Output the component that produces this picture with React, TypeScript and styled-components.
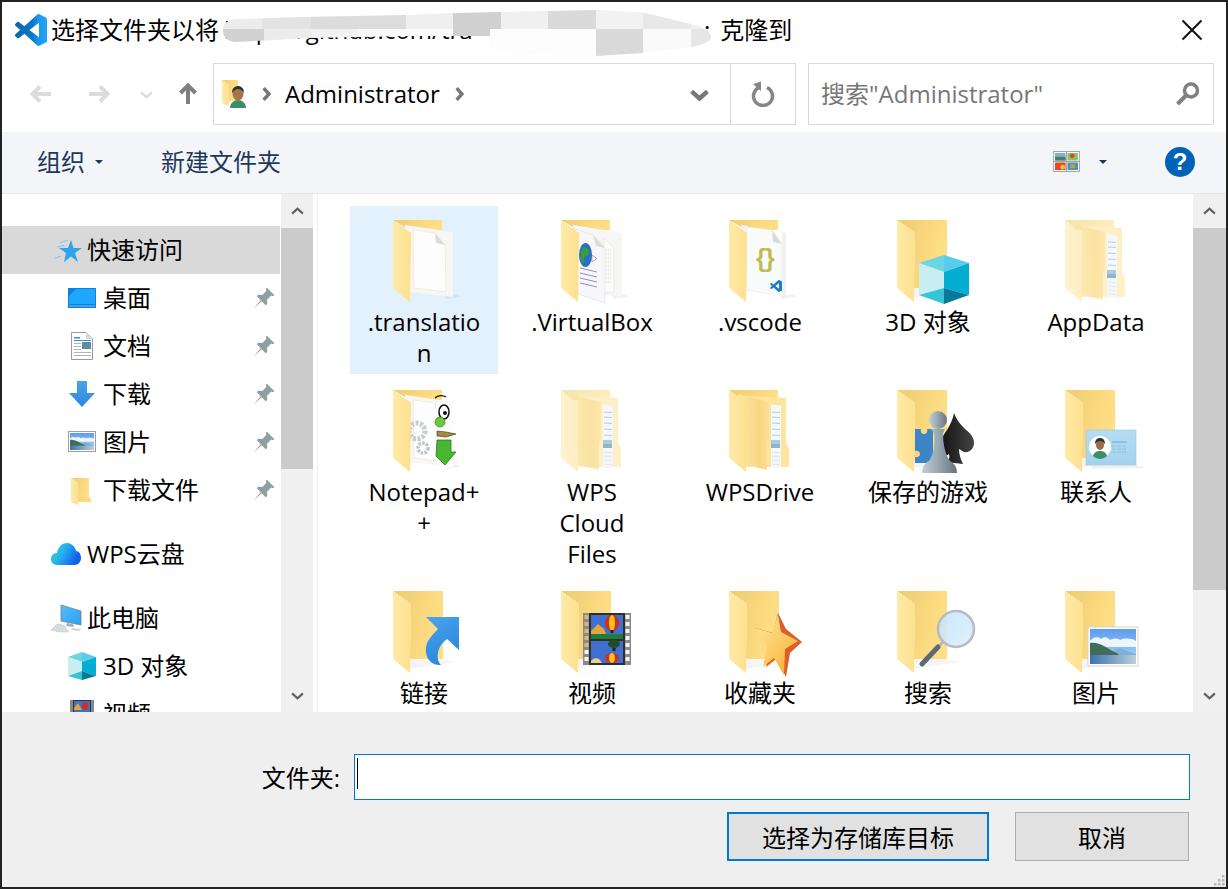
import React from "react";
import styled, { createGlobalStyle } from "styled-components";

const Global = createGlobalStyle`
  html, body { margin: 0; padding: 0; background: #fff; }
  * { box-sizing: border-box; }
  body { font-family: "Open Sans", "Noto Sans CJK SC", sans-serif; font-size: 24px; color: #000; }
`;

const HiddenDefs = styled.svg`
  position: absolute;
  width: 0;
  height: 0;
`;

const Dialog = styled.div`
  width: 1228px;
  height: 889px;
  border: 2px solid #222;
  background: #fff;
  display: flex;
  flex-direction: column;
  position: relative;
  overflow: hidden;
`;

const TitleBar = styled.div`
  height: 60px;
  flex: none;
  display: flex;
  align-items: center;
  padding: 0 14px 4px 13px;
  line-height: 30px;
  white-space: nowrap;
`;
const TitleIcon = styled.svg`
  width: 32px;
  height: 32px;
  margin-right: 4px;
  flex: none;
`;
const Obscured = styled.span`
  display: block;
  width: 485px;
  flex: none;
  height: 56px;
  line-height: 56px;
  position: relative;
`;
const ObscuredText = styled.span`
  display: block;
  width: 272px;
  overflow: hidden;
  padding-left: 5px;
`;
const Smudge = styled.svg`
  position: absolute;
  left: -3px;
  top: -2px;
  width: 510px;
  height: 70px;
`;
const Colon = styled.span`
  margin-right: 10px;
`;
const CloseIcon = styled.svg`
  width: 22px;
  height: 22px;
  margin-left: auto;
  margin-right: 9px;
`;

const NavBar = styled.div`
  height: 70px;
  flex: none;
  display: flex;
  padding: 1px 12px 7px 10px;
  align-items: stretch;
`;
const NavButton = styled.div<{ $w: number }>`
  width: ${(p) => p.$w}px;
  flex: none;
  display: flex;
  align-items: center;
  justify-content: center;
`;
const AddressBox = styled.div`
  width: 583px;
  flex: none;
  margin-left: 3px;
  border: 1px solid #d9d9d9;
  display: flex;
  align-items: center;
`;
const AddressIcon = styled.svg`
  width: 26px;
  height: 30px;
  margin-left: 7px;
  margin-right: 12px;
  flex: none;
`;
const Crumb = styled.span`
  margin: 0 12px 0 12px;
  line-height: 30px;
`;
const AddressEnd = styled.div`
  margin-left: auto;
  display: flex;
  align-items: stretch;
  height: 100%;
`;
const DropCell = styled.div`
  width: 62px;
  display: flex;
  align-items: center;
  justify-content: center;
`;
const RefreshCell = styled.div`
  width: 65px;
  border-left: 1px solid #d9d9d9;
  display: flex;
  align-items: center;
  justify-content: center;
`;
const SearchBox = styled.div`
  width: 406px;
  flex: none;
  margin-left: 12px;
  border: 1px solid #d9d9d9;
  display: flex;
  align-items: center;
  justify-content: space-between;
  padding: 0 12px 0 12px;
  color: #777;
`;
const SearchText = styled.span`
  line-height: 30px;
`;
const SearchIcon = styled.svg`
  width: 26px;
  height: 26px;
`;

const Toolbar = styled.div`
  height: 62px;
  flex: none;
  background: #f4f5f8;
  border-bottom: 1px solid #e6e6e6;
  display: flex;
  align-items: center;
  padding: 0 31px 2px 35px;
  color: #1e395b;
`;
const ToolLabel = styled.span`
  line-height: 30px;
`;
const Caret = styled.span<{ $gap: number }>`
  width: 0;
  height: 0;
  border-left: 4px solid transparent;
  border-right: 4px solid transparent;
  border-top: 4px solid #1e395b;
  margin-left: ${(p) => p.$gap}px;
`;
const NewFolder = styled(ToolLabel)`
  margin-left: 58px;
`;
const ToolRight = styled.div`
  margin-left: auto;
  display: flex;
  align-items: center;
`;
const ViewIcon = styled.svg`
  width: 27px;
  height: 21px;
`;
const Help = styled.div`
  width: 30px;
  height: 30px;
  border-radius: 50%;
  background: #0062b8;
  color: #fff;
  font-family: "Liberation Sans", sans-serif;
  font-weight: 700;
  font-size: 24px;
  line-height: 30px;
  text-align: center;
  margin-left: 58px;
`;

const Content = styled.div`
  flex: 1;
  min-height: 0;
  display: flex;
  overflow: hidden;
`;
const Sidebar = styled.div`
  width: 278px;
  flex: none;
  padding-top: 32px;
  margin-right: 1px;
  overflow: hidden;
`;
const SideGroup = styled.div`
  margin-bottom: 16px;
`;
const SideRow = styled.div<{ $level: number; $active?: boolean }>`
  height: 48px;
  display: flex;
  align-items: center;
  background: ${(p) => (p.$active ? "#d9d9d9" : "transparent")};
  padding-left: ${(p) => (p.$level === 1 ? 50 : 66)}px;
  gap: 3px;
  white-space: nowrap;
`;
const SideLabel = styled.span`
  line-height: 30px;
`;
const SideIcon = styled.svg`
  width: 32px;
  height: 32px;
  flex: none;
  overflow: visible;
`;
const Pin = styled.svg`
  width: 22px;
  height: 22px;
  margin-left: auto;
  margin-right: 5px;
  flex: none;
`;
const ScrollTrack = styled.div<{ $w: number }>`
  width: ${(p) => p.$w}px;
  flex: none;
  background: #f0f0f0;
  display: flex;
  flex-direction: column;
`;
const ScrollArrow = styled.div`
  height: 34px;
  flex: none;
  display: flex;
  align-items: center;
  justify-content: center;
`;
const Thumb = styled.div<{ $h: number }>`
  height: ${(p) => p.$h}px;
  flex: none;
  background: #cbcbcb;
`;
const ScrollRest = styled.div`
  flex: 1;
`;
const Splitter = styled.div`
  width: 5px;
  flex: none;
  background: #fff;
  border-right: 1px solid #f0f0f0;
`;
const Files = styled.div`
  width: 875px;
  flex: none;
  overflow: hidden;
  padding: 12px 0 0 32px;
  display: grid;
  grid-template-columns: repeat(5, 148px);
  column-gap: 20px;
  row-gap: 2px;
  align-items: start;
  align-content: start;
  background: #fff;
`;
const FileCell = styled.div<{ $selected?: boolean }>`
  padding: 14px 0 6px;
  background: ${(p) => (p.$selected ? "#e3f1fc" : "transparent")};
  display: flex;
  flex-direction: column;
  align-items: center;
`;
const FileIcon = styled.svg`
  width: 148px;
  height: 82px;
  flex: none;
  overflow: visible;
`;
const FileName = styled.div`
  margin-top: 4px;
  line-height: 31px;
  white-space: pre-line;
  text-align: center;
`;

const Footer = styled.div`
  height: 175px;
  flex: none;
  background: #efefef;
  padding: 42px 36px 0 0;
  display: flex;
  flex-direction: column;
  align-items: flex-end;
  gap: 12px;
  position: relative;
`;
const FieldRow = styled.div`
  display: flex;
  align-items: center;
  gap: 14px;
`;
const FieldLabel = styled.span`
  padding-bottom: 2px;
`;
const Field = styled.div`
  width: 836px;
  height: 46px;
  border: 1px solid #0078d7;
  background: #fff;
  padding: 3px 0 0 2px;
`;
const TextCaret = styled.div`
  width: 1px;
  height: 31px;
  background: #000;
`;
const ButtonRow = styled.div`
  display: flex;
  gap: 26px;
  padding-right: 1px;
`;
const DialogButton = styled.div<{ $primary?: boolean }>`
  width: ${(p) => (p.$primary ? 262 : 174)}px;
  height: 49px;
  background: #e1e1e1;
  border: ${(p) => (p.$primary ? "2px solid #0078d7" : "1px solid #adadad")};
  display: flex;
  align-items: center;
  justify-content: center;
  line-height: 30px;
  padding-top: 2px;
`;
const Grip = styled.svg`
  position: absolute;
  right: 1px;
  bottom: 1px;
  width: 12px;
  height: 12px;
`;

/* ---------- drawings ---------- */

const VS_PATH =
  "M23.150 2.587L18.210.210a1.494 1.494 0 0 0-1.705.290l-9.460 8.630-4.120-3.128a.999.999 0 0 0-1.276.057L.327 7.261A1 1 0 0 0 .326 8.740L3.899 12 .326 15.260a1 1 0 0 0 .001 1.479L1.650 17.940a.999.999 0 0 0 1.276.057l4.120-3.128 9.460 8.630a1.492 1.492 0 0 0 1.704.290l4.942-2.377A1.500 1.500 0 0 0 24 20.060V3.939a1.500 1.500 0 0 0-.850-1.352zm-5.146 14.861L10.826 12l7.178-5.448v10.896z";

const Defs = () => (
  <HiddenDefs aria-hidden>
    <defs>
      <linearGradient id="back" x1="0" y1="0" x2="1" y2="0.3">
        <stop offset="0" stopColor="#eecb72" />
        <stop offset="1" stopColor="#ffdf85" />
      </linearGradient>
      <linearGradient id="flap" x1="0" y1="0" x2="1" y2="0">
        <stop offset="0" stopColor="#ffeaa8" />
        <stop offset="1" stopColor="#fde08f" />
      </linearGradient>
      <linearGradient id="flap2" x1="0" y1="0" x2="1" y2="0">
        <stop offset="0" stopColor="#fee8a4" />
        <stop offset="0.7" stopColor="#f7d783" />
        <stop offset="1" stopColor="#fde093" />
      </linearGradient>
      <linearGradient id="vs" x1="0" y1="0" x2="1" y2="0">
        <stop offset="0" stopColor="#0a66ab" />
        <stop offset="0.55" stopColor="#0a78c9" />
        <stop offset="0.72" stopColor="#1b97ee" />
        <stop offset="1" stopColor="#22a4f5" />
      </linearGradient>
      <linearGradient id="sideArrow" x1="0" y1="0" x2="0" y2="1">
        <stop offset="0" stopColor="#4aa3ec" />
        <stop offset="1" stopColor="#2d86dc" />
      </linearGradient>
      <linearGradient id="shortcut" x1="0" y1="0" x2="0.4" y2="1">
        <stop offset="0" stopColor="#49a5ec" />
        <stop offset="1" stopColor="#2b88dc" />
      </linearGradient>
      <linearGradient id="starFace" x1="0" y1="0" x2="1" y2="1">
        <stop offset="0" stopColor="#ffe9a2" />
        <stop offset="0.6" stopColor="#fbc65a" />
        <stop offset="1" stopColor="#f49d24" />
      </linearGradient>
      <linearGradient id="lens" x1="0" y1="0" x2="1" y2="1">
        <stop offset="0" stopColor="#c4e3fa" />
        <stop offset="1" stopColor="#d9eefc" />
      </linearGradient>
      <linearGradient id="sky" x1="0" y1="0" x2="0" y2="1">
        <stop offset="0" stopColor="#5d9cf0" />
        <stop offset="1" stopColor="#b8d8f6" />
      </linearGradient>
      <linearGradient id="water" x1="0" y1="0" x2="1" y2="0">
        <stop offset="0" stopColor="#3d72ab" />
        <stop offset="1" stopColor="#b9d0dc" />
      </linearGradient>
      <linearGradient id="pawn" x1="0" y1="0" x2="1" y2="0">
        <stop offset="0" stopColor="#c5ced4" />
        <stop offset="0.5" stopColor="#96a4ae" />
        <stop offset="1" stopColor="#66747e" />
      </linearGradient>
      <linearGradient id="spade" x1="0" y1="0" x2="1" y2="0">
        <stop offset="0" stopColor="#111" />
        <stop offset="1" stopColor="#444" />
      </linearGradient>
      <linearGradient id="cloud" x1="0" y1="0" x2="1" y2="0.4">
        <stop offset="0" stopColor="#2fdcc0" />
        <stop offset="0.5" stopColor="#27aef0" />
        <stop offset="1" stopColor="#1160e8" />
      </linearGradient>
      <linearGradient id="screen" x1="0" y1="0" x2="1" y2="1">
        <stop offset="0" stopColor="#56bdfb" />
        <stop offset="1" stopColor="#2e9ff0" />
      </linearGradient>
      <linearGradient id="card" x1="0" y1="0" x2="0" y2="1">
        <stop offset="0" stopColor="#b5dcf4" />
        <stop offset="1" stopColor="#a4d2ef" />
      </linearGradient>
    </defs>
  </HiddenDefs>
);

const PlainFolder = () => (
  <>
    <polygon points="60,68 93,68 106,71 60,78" fill="#000" opacity="0.04" />
    <polygon points="43,0 93,0 93,68 60,68 60,60 61,13" fill="url(#back)" />
    <polygon points="43,0 61,13 60,82 43,68" fill="url(#flap)" />
  </>
);

const PaperFolderBack = () => (
  <>
    <polygon points="43,0 92,0 92,10 60,10" fill="url(#back)" />
    <polygon points="95,76 106,74 112,77 95,79" fill="#000" opacity="0.05" />
  </>
);
const FlapFront = () => <polygon points="43,0 61,13 60,82 43,68" fill="url(#flap)" />;

const DocPaper = () => (
  <>
    <polygon points="55,5 103,12 103,77 60,72" fill="#f6f6f6" />
    <polygon points="63,10 85,13 95,25 96,72 64,68" fill="#fdfdfd" stroke="#f3e6bf" strokeWidth="0.7" />
    <polygon points="85,13 95,25 86,23" fill="#dcdcdc" />
  </>
);

const Translation = () => (
  <>
    <PaperFolderBack />
    <DocPaper />
    <FlapFront />
  </>
);

const VirtualBox = () => (
  <>
    <PaperFolderBack />
    <polygon points="55,5 104,13 104,77 60,72" fill="#f6f6f6" />
    <polygon points="86,18 96,28 96,72 86,72" fill="#fbfbfb" stroke="#f0e4c0" strokeWidth="0.6" />
    {[30, 34, 38, 42, 46, 50, 54, 58, 62].map((y) => (
      <line key={y} x1="88" x2="94" y1={y} y2={y} stroke="#c4c4c4" strokeWidth="0.7" strokeDasharray="1 1" />
    ))}
    <polygon points="54,8 75,15 87,28 87,83 60,74" fill="#f7f7fa" stroke="#d4d4d8" strokeWidth="0.5" />
    <polygon points="75,15 87,28 78,26" fill="#dcdcdc" />
    <polygon points="74,35 79,38.500 74,42" fill="#fff" stroke="#8c8ab8" strokeWidth="0.7" />
    <FlapFront />
    <ellipse cx="67.500" cy="35" rx="6.500" ry="12" fill="#2a6dc4" />
    <path d="M64 28c3-2 6 0 7 4s-2 3-4 5-1 5-2 7c-3-3-3-10-1-16z" fill="#3b9d3a" />
    {[48, 53, 58, 63].map((y) => (
      <line key={y} x1="62" x2="79" y1={y} y2={y + 4} stroke="#8f8fc0" strokeWidth="1" />
    ))}
  </>
);

const BraceText = styled.text`
  font-family: "Liberation Sans", sans-serif;
  font-size: 25px;
  font-weight: 700;
  fill: #bdbb52;
`;

const VsCodeFolder = () => (
  <>
    <PaperFolderBack />
    <polygon points="55,5 62,6 62,72 58,72" fill="#f3f3f3" />
    <polygon points="61,7 86,10 96,24 96,76 61,70" fill="#f9fbfb" stroke="#e4e4e4" strokeWidth="0.5" />
    <polygon points="86,10 96,24 87,22" fill="#dadada" />
    <polygon points="96,12 100,13 100,77 96,76" fill="#f1f1f1" />
    <BraceText x="70" y="47">{"{"}</BraceText>
    <BraceText x="79" y="47">{"}"}</BraceText>
    <svg x="84" y="60" width="12" height="12" viewBox="0 0 24 24">
      <path d={VS_PATH} fill="#1a7ec9" />
    </svg>
    <FlapFront />
  </>
);

const Cube3D = () => (
  <>
    <PlainFolder />
    <polygon points="90,35 65,43 90,52" fill="#6bd5e4" />
    <polygon points="90,35 115,43 90,52" fill="#58cdeb" />
    <polygon points="65,43 90,52 90,68 65,75" fill="#c9eef2" />
    <polygon points="115,43 90,52 90,68 115,75" fill="#04aed2" />
    <polygon points="65,75 90,68 90,84" fill="#35c5d4" />
    <polygon points="115,75 90,68 90,84" fill="#0a7a9c" />
  </>
);

const StackFolder = ({ fade }: { fade?: boolean }) => (
  <>
    <g opacity={fade ? 0.55 : 1}>
      <polygon points="43,0 92,0 92,10 55,10" fill="url(#back)" />
      <polygon points="60,6 100,8 100,53 103,58 103,77 60,77" fill="#fde59e" />
    </g>
    <polygon points="85,14 95,16 95,78 85,78" fill="#f5f7fa" />
    {[22, 27, 33, 39, 45, 62, 66, 70, 74].map((y) => (
      <line key={y} x1="86" x2="94" y1={y} y2={y + 0.5} stroke={y < 50 ? "#9cc8ea" : "#d8dde2"} strokeWidth="0.8" />
    ))}
    <rect x="85" y="50" width="9" height="7" fill="#a8cbe6" />
    <rect x="85" y="54" width="9" height="4" fill="#93b4c4" />
    <g opacity={fade ? 0.55 : 1}>
      <polygon points="52,4 83,12 83,50 81,53 81,80 60,75" fill="url(#flap2)" />
      <polygon points="43,0 61,13 60,82 43,68" fill="url(#flap)" />
    </g>
  </>
);

const NotepadFolder = () => (
  <>
    <PaperFolderBack />
    <DocPaper />
    <polygon points="86,12 103,14 103,78 86,76" fill="#fcfcfc" />
    <circle cx="67" cy="41" r="8" fill="none" stroke="#c6cdd3" strokeWidth="5" strokeDasharray="3 1.500" />
    <circle cx="73" cy="58" r="5" fill="none" stroke="#bcc4ca" strokeWidth="3.500" strokeDasharray="2.500 1.200" />
    <path d="M85 8c3-3 8-3 11-1" stroke="#111" strokeWidth="1.400" fill="none" />
    <ellipse cx="94" cy="22" rx="5" ry="7" fill="#fff" stroke="#111" strokeWidth="1.500" />
    <circle cx="95" cy="23" r="2" fill="#111" />
    <ellipse cx="90" cy="32" rx="5" ry="5" fill="#6dc93b" stroke="#1e6b14" strokeWidth="0.6" />
    <polygon points="87,41 96,42 106,44 96,47 87,46" fill="#a88a38" stroke="#333" strokeWidth="0.6" />
    <polygon points="87,50 101,50 101,62 106,62 95,75 86,66" fill="#45b82e" stroke="#1e6b14" strokeWidth="0.7" />
    <FlapFront />
  </>
);

const GameFolder = () => (
  <>
    <PlainFolder />
    <path d="M61 39h6c-1 3 1 5 3 5s4-2 3-5h6v34H61v-6c3 1 5-1 5-3s-2-4-5-3z" fill="#3d86c6" />
    <path d="M92 72c3-1 4-4 3-8-2 2-6 2-8-2-3-5-1-12 6-22 3-5 6-11 7-17 2 6 6 11 11 16 5 4 9 8 9 14 0 6-5 10-10 9-2-1-3-2-5-3 0 4 1 9 4 15z" fill="url(#spade)" />
    <circle cx="84" cy="30" r="9" fill="url(#pawn)" />
    <path d="M77 39h14l-2 4c0 11 2 21 7 28 4 2 7 6 7 12H68c0-6 3-10 7-12 5-7 6-17 5-28z" fill="url(#pawn)" />
  </>
);

const ContactFolder = () => (
  <>
    <PlainFolder />
    <polygon points="114,75 124,78 70,79 70,75" fill="#000" opacity="0.06" />
    <rect x="64" y="40" width="50" height="35" fill="url(#card)" stroke="#9ac8e6" strokeWidth="0.6" />
    <circle cx="78" cy="57" r="11" fill="#fff" />
    <path d="M71 66c1-4 4-5 7-5s6 1 7 5c-2 2-5 3-7 3s-5-1-7-3z" fill="#3a8f66" />
    <ellipse cx="78" cy="55" rx="4" ry="5" fill="#9a6b4a" />
    <path d="M73 54c0-4 2-6 5-6s5 2 5 6c-2-2-3-3-5-3s-3 1-5 3z" fill="#33302d" />
    <line x1="90" x2="105" y1="52" y2="52" stroke="#6fa6c9" />
    {[56, 59, 62].map((y) => (
      <line key={y} x1="90" x2="105" y1={y} y2={y} stroke="#8fc0dc" strokeDasharray="4 1" />
    ))}
  </>
);

const LinkFolder = () => (
  <>
    <PlainFolder />
    <path d="M76 26h33v33L97 48c-5 4-8 8-9 14-1 4 0 9 3 12-5 0-9-1-12-5-4-5-4-13-1-19 3-5 7-9 10-12z" fill="url(#shortcut)" />
  </>
);

const VideoFolder = () => (
  <>
    <PlainFolder />
    <rect x="65" y="22" width="48" height="52" fill="#8a8a8a" />
    {[24, 31, 38, 45, 52, 59, 66].map((y) => (
      <React.Fragment key={y}>
        <rect x="66.500" y={y} width="4" height="4" fill={y > 58 ? "#f3f3f3" : "#d6b97d"} />
        <rect x="107.500" y={y} width="4" height="4" fill="#f3f3f3" />
      </React.Fragment>
    ))}
    <rect x="71" y="22" width="36" height="52" fill="#2f2f2f" />
    <rect x="73" y="24" width="32" height="24" fill="#3f6fd1" />
    <rect x="73" y="50" width="32" height="22" fill="#3f6fd1" />
    <polygon points="73,40 80,33 86,38 90,48 73,48" fill="#e6a63c" />
    <rect x="73" y="43" width="32" height="5" fill="#1f7d3c" />
    <ellipse cx="94" cy="32" rx="7" ry="8" fill="#d62c1f" />
    <ellipse cx="94" cy="32" rx="3" ry="8" fill="#f4c21f" />
    <rect x="92.500" y="39" width="3" height="3" fill="#222" />
    <ellipse cx="96" cy="53" rx="6" ry="4" fill="#1f4d2c" />
    <rect x="94.500" y="57" width="3" height="3" fill="#222" />
    <ellipse cx="94" cy="67" rx="7" ry="5" fill="#d62c1f" />
    <ellipse cx="94" cy="67" rx="3" ry="5" fill="#f4c21f" />
    <path d="M73 70c2-3 6-4 9-1l2 3H73z" fill="#e9d08a" />
  </>
);

const StarFolder = () => (
  <>
    <PlainFolder />
    <polygon points="92,22 100,38 116,51 104,62 100,86 90,68 80,76 84,52 69,37 87,42" fill="#d9602a" />
    <polygon points="92,24 95,41 112,50 99,58 98,84 88,67 77,76 81,54 69,37 86,42" fill="url(#starFace)" />
  </>
);

const SearchFolder = () => (
  <>
    <PlainFolder />
    <circle cx="102" cy="38" r="18" fill="url(#lens)" fillOpacity="0.85" stroke="#b3bcc4" strokeWidth="2.500" />
    <line x1="89" y1="51" x2="85" y2="55" stroke="#b3bcc4" strokeWidth="3" />
    <line x1="84" y1="56" x2="68" y2="73" stroke="#5d6a74" strokeWidth="5" strokeLinecap="round" />
  </>
);

const Landscape = ({ x, y, w, h }: { x: number; y: number; w: number; h: number }) => (
  <svg x={x} y={y} width={w} height={h} viewBox="0 0 46 35" preserveAspectRatio="none">
    <rect width="46" height="35" fill="url(#sky)" />
    <path d="M0 12c3-4 8-5 11-2 3-3 7-2 9 1 4-2 8-2 10 0 5-2 11-2 16 1v6H0z" fill="#eef6fc" />
    <path d="M0 14c5-1 10 1 14 3 4 2 7 5 14 7 6 2 12 2 18 3v2H0z" fill="#3f6e58" />
    <path d="M24 21c3-2 7-2 10 0 4 1 8 3 12 4v2H30z" fill="#7eb0d8" />
    <rect y="26" width="46" height="9" fill="url(#water)" />
  </svg>
);

const PictureFolder = () => (
  <>
    <PlainFolder />
    <rect x="66" y="36" width="50" height="39" fill="#fff" stroke="#d4d4d4" />
    <Landscape x={68} y={38} w={46} h={35} />
  </>
);

const fileIcons: Record<string, React.ReactNode> = {
  translation: <Translation />,
  vbox: <VirtualBox />,
  vscode: <VsCodeFolder />,
  cube: <Cube3D />,
  appdata: <StackFolder fade />,
  notepad: <NotepadFolder />,
  wpscloud: <StackFolder fade />,
  wpsdrive: <StackFolder />,
  game: <GameFolder />,
  contact: <ContactFolder />,
  link: <LinkFolder />,
  video: <VideoFolder />,
  star: <StarFolder />,
  search: <SearchFolder />,
  picture: <PictureFolder />,
};

const files = [
  { name: ".translatio\nn", icon: "translation", selected: true },
  { name: ".VirtualBox", icon: "vbox" },
  { name: ".vscode", icon: "vscode" },
  { name: "3D 对象", icon: "cube" },
  { name: "AppData", icon: "appdata" },
  { name: "Notepad+\n+", icon: "notepad" },
  { name: "WPS\nCloud\nFiles", icon: "wpscloud" },
  { name: "WPSDrive", icon: "wpsdrive" },
  { name: "保存的游戏", icon: "game" },
  { name: "联系人", icon: "contact" },
  { name: "链接", icon: "link" },
  { name: "视频", icon: "video" },
  { name: "收藏夹", icon: "star" },
  { name: "搜索", icon: "search" },
  { name: "图片", icon: "picture" },
];

const PinGlyph = () => (
  <Pin viewBox="0 0 20 20">
    <path d="M12.500 0.500 19.500 7.500 17.800 8.300 16.500 7.800 12.800 11.500 13 15.500 11.500 16.500 3.500 8.500 4.500 7 8.500 7.200 12.200 3.500 11.700 2.200z" fill="#929ca3" />
    <path d="M7 12 0.500 19.500 8 13z" fill="#929ca3" />
  </Pin>
);

const sideIcons: Record<string, React.ReactNode> = {
  star: (
    <>
      <polygon points="19,6 21.500,14 30,14 23,19 26,28 19,22.500 12,28 14,19 7,14 16,14" fill="#2ea3ee" />
      <path d="M8 9l8 -3M5 13l7 -1.500M3 24l6 -2" stroke="#7cc6f5" strokeWidth="1" />
    </>
  ),
  desktop: (
    <>
      <rect x="0" y="6" width="28" height="20" fill="#0a84d8" />
      <polygon points="8,7 27,7 27,22 1,22 1,14" fill="#1ea7fd" />
      <rect x="1" y="23.500" width="26" height="1" fill="#bfe4fb" opacity="0.6" />
    </>
  ),
  doc: (
    <>
      <polygon points="3.500,2.500 18,2.500 24.500,9 24.500,29.500 3.500,29.500" fill="#fff" stroke="#9a9a9a" />
      <polygon points="18,2.500 24.500,9 18,9" fill="#d9d9d9" />
      <rect x="6" y="10" width="17" height="1" fill="#2e96e6" />
      <rect x="6" y="7" width="6" height="1.500" fill="#2e96e6" />
      <rect x="14" y="12" width="9" height="7" fill="#5f8aa0" />
      {[13, 16, 19, 22, 25].map((y) => (
        <rect key={y} x="6" y={y} width={y < 20 ? 7 : 17} height="1" fill="#b4b4b4" />
      ))}
    </>
  ),
  down: <polygon points="9,3 19,3 19,15 27,15 14,29 1,15 9,15" fill="url(#sideArrow)" />,
  picture: (
    <>
      <rect x="0.500" y="5.500" width="27" height="20" fill="#fff" stroke="#9e9e9e" />
      <Landscape x={2} y={7} w={24} h={17} />
    </>
  ),
  folder: (
    <>
      <polygon points="3,4 21,4 21,24 9,24" fill="url(#back)" />
      <polygon points="3,4 10,8 10,31 3,28" fill="url(#flap)" />
      <polygon points="10,24 23,24 23,28 10,28" fill="#fbd97f" />
    </>
  ),
  cloud: (
    <path d="M5 27C1 27-1 24-1 21s2-6 6-6c1-6 5-10 10-10 4 0 8 3 9 8 3 0 5 3 5 7s-3 7-6 7z" fill="url(#cloud)" />
  ),
  pc: (
    <>
      <polygon points="9,3 29,9 29,23 9,19" fill="url(#screen)" stroke="#6d8598" strokeWidth="0.8" />
      <polygon points="15,21 21,22 22,25 14,24" fill="#9fb1bf" />
      <polygon points="5,22 12,23 17,30 7,30 -1,28" fill="#d6dbdf" stroke="#b2b8bd" strokeWidth="0.5" strokeDasharray="2 1" />
      <polygon points="20,26 29,27 27,29 19,28" fill="#cfd4d8" />
    </>
  ),
  cube: (
    <>
      <polygon points="14,2 0,7 14,12" fill="#6bd5e4" />
      <polygon points="14,2 28,7 14,12" fill="#58cdeb" />
      <polygon points="0,7 14,12 14,21 0,26" fill="#c9eef2" />
      <polygon points="28,7 14,12 14,21 28,26" fill="#04aed2" />
      <polygon points="0,26 14,21 14,30" fill="#35c5d4" />
      <polygon points="28,26 14,21 14,30" fill="#0a7a9c" />
    </>
  ),
  film: (
    <>
      <rect x="2" y="2" width="24" height="26" fill="#888" />
      <rect x="5" y="2" width="18" height="26" fill="#333" />
      <rect x="6" y="3" width="16" height="24" fill="#3f6fd1" />
      <ellipse cx="17" cy="8" rx="3" ry="4" fill="#d62c1f" />
      <polygon points="6,10 10,5 14,12 6,12" fill="#e6a63c" />
    </>
  ),
};

const Chevron = ({ dir, size, color, sw }: { dir: "left" | "right" | "up" | "down"; size: number; color: string; sw: number }) => {
  const d = {
    up: "M2 16 12 7 22 16",
    down: "M2 8 12 17 22 8",
    right: "M8 2 17 12 8 22",
    left: "M16 2 7 12 16 22",
  }[dir];
  return (
    <svg width={size} height={size} viewBox="0 0 24 24">
      <path d={d} fill="none" stroke={color} strokeWidth={sw} />
    </svg>
  );
};

const ArrowGlyph = ({ dir, color }: { dir: "left" | "right" | "up"; color: string }) => {
  const r = dir === "left" ? 180 : dir === "up" ? -90 : 0;
  return (
    <svg width="22" height="22" viewBox="0 0 22 22" style={{ transform: `rotate(${r}deg)` }}>
      <path d="M1 11H19M12 3.500 19.500 11 12 18.500" fill="none" stroke={color} strokeWidth="4" />
    </svg>
  );
};

const blocks = [
  [215, 8, 46, 22, "#ececec"],
  [261, 8, 49, 22, "#e3e3e3"],
  [310, 8, 95, 22, "#dcdcdc"],
  [405, 8, 47, 22, "#efefef"],
  [452, 8, 48, 28, "#d0d0d0"],
  [500, 8, 47, 21, "#f0f0f0"],
  [547, 8, 48, 21, "#dadada"],
  [595, 8, 47, 21, "#f2f2f2"],
  [642, 8, 48, 21, "#e8e8e8"],
  [690, 8, 30, 21, "#f0f0f0"],
  [215, 29, 48, 20, "#d2d2d2"],
  [263, 29, 47, 20, "#ececec"],
  [310, 29, 48, 20, "#f2f2f2"],
  [358, 29, 47, 20, "#f8f8f8"],
  [405, 29, 47, 20, "#fbfbfb"],
  [452, 36, 40, 20, "#fdfdfd"],
  [489, 29, 106, 30, "#fdfdfd"],
  [595, 29, 47, 30, "#d9d9d9"],
  [642, 29, 48, 30, "#fafafa"],
  [690, 29, 30, 30, "#e6e6e6"],
] as const;

const sideTop = [
  { label: "桌面", icon: "desktop" },
  { label: "文档", icon: "doc" },
  { label: "下载", icon: "down" },
  { label: "图片", icon: "picture" },
  { label: "下载文件", icon: "folder" },
];

export default function App() {
  return (
    <>
      <Global />
      <Defs />
      <Dialog>
        <TitleBar>
          <TitleIcon viewBox="0 0 24 24">
            <path d={VS_PATH} fill="url(#vs)" />
          </TitleIcon>
          <span>选择文件夹以将</span>
          <Obscured>
            <ObscuredText>https://github.com/tra</ObscuredText>
            <Smudge viewBox="215 0 510 70">
              <defs>
                <clipPath id="smudgeClip">
                  <path d="M222 30Q222 20 236 19L300 17 405 15 452 13 500 12 595 10 640 12 690 24Q710 28 710 38 708 44 690 47L642 53 595 56 520 54Q490 54 489 45V36H405L310 38 236 42Q222 42 222 30Z" />
                </clipPath>
              </defs>
              <g clipPath="url(#smudgeClip)">
                {blocks.map(([x, y, w, h, c], i) => (
                  <rect key={i} x={x} y={y} width={w} height={h} fill={c} />
                ))}
              </g>
            </Smudge>
          </Obscured>
          <Colon>:</Colon>
          <span>克隆到</span>
          <CloseIcon viewBox="0 0 22 22">
            <path d="M1.500 1.500 20.500 20.500M20.500 1.500 1.500 20.500" stroke="#111" strokeWidth="2" fill="none" />
          </CloseIcon>
        </TitleBar>

        <NavBar>
          <NavButton $w={58}>
            <ArrowGlyph dir="left" color="#dcdcdc" />
          </NavButton>
          <NavButton $w={58}>
            <ArrowGlyph dir="right" color="#dcdcdc" />
          </NavButton>
          <NavButton $w={37}>
            <Chevron dir="down" size={13} color="#dcdcdc" sw={4.5} />
          </NavButton>
          <NavButton $w={45}>
            <ArrowGlyph dir="up" color="#7f7f7f" />
          </NavButton>
          <AddressBox>
            <AddressIcon viewBox="0 0 26 30">
              <polygon points="1,1 17,1 17,22 7,22" fill="url(#back)" />
              <polygon points="1,1 8,5 8,27 1,24" fill="url(#flap)" />
              <path d="M9 29c0-5 4-8 8-8s8 3 8 8z" fill="#3a8f66" />
              <ellipse cx="17" cy="15" rx="5.500" ry="6.500" fill="#a5744f" />
              <path d="M11 14c0-5 3-7 6-7s6 2 6 7c-2-3-4-4-6-4s-4 1-6 4z" fill="#33302d" />
            </AddressIcon>
            <Chevron dir="right" size={14} color="#777" sw={6} />
            <Crumb>Administrator</Crumb>
            <Chevron dir="right" size={14} color="#777" sw={6} />
            <AddressEnd>
              <DropCell>
                <Chevron dir="down" size={19} color="#777" sw={5.5} />
              </DropCell>
              <RefreshCell>
                <svg width="24" height="26" viewBox="0 0 24 26">
                  <path d="M8 6.500A9.500 9.500 0 1 0 16 6.500" fill="none" stroke="#868686" strokeWidth="3.500" />
                  <polygon points="2,3 10,0.500 10,10" fill="#868686" />
                </svg>
              </RefreshCell>
            </AddressEnd>
          </AddressBox>
          <SearchBox>
            <SearchText>搜索"Administrator"</SearchText>
            <SearchIcon viewBox="0 0 26 26">
              <circle cx="16" cy="9.500" r="6.500" fill="none" stroke="#808080" strokeWidth="3.500" />
              <line x1="11" y1="14.500" x2="2.500" y2="23" stroke="#808080" strokeWidth="4" />
            </SearchIcon>
          </SearchBox>
        </NavBar>

        <Toolbar>
          <ToolLabel>组织</ToolLabel>
          <Caret $gap={10} />
          <NewFolder>新建文件夹</NewFolder>
          <ToolRight>
            <ViewIcon viewBox="0 0 28 22">
              <rect x="0.500" y="0.500" width="27" height="21" fill="#fff" stroke="#a0a0a0" />
              <rect x="2" y="2" width="11" height="8" fill="#7fb0d8" />
              <rect x="2" y="6" width="11" height="4" fill="#4f7c63" />
              <rect x="15" y="2" width="11" height="8" fill="#8fc06a" />
              <circle cx="20" cy="5" r="2.500" fill="#d64a2a" />
              <rect x="2" y="12" width="11" height="8" fill="#e04a2a" />
              <circle cx="10" cy="17" r="2.500" fill="#f0c020" />
              <rect x="15" y="12" width="11" height="8" fill="#4a90c8" />
              <rect x="18" y="14" width="5" height="4" fill="#c8a030" />
              <line x1="14" y1="0" x2="14" y2="22" stroke="#a0a0a0" />
              <line x1="0" y1="11" x2="28" y2="11" stroke="#a0a0a0" />
            </ViewIcon>
            <Caret $gap={19} />
            <Help>?</Help>
          </ToolRight>
        </Toolbar>

        <Content>
          <Sidebar>
            <SideGroup>
              <SideRow $level={1} $active>
                <SideIcon viewBox="0 0 32 32">{sideIcons.star}</SideIcon>
                <SideLabel>快速访问</SideLabel>
              </SideRow>
              {sideTop.map((r) => (
                <SideRow $level={2} key={r.label}>
                  <SideIcon viewBox="0 0 32 32">{sideIcons[r.icon]}</SideIcon>
                  <SideLabel>{r.label}</SideLabel>
                  <PinGlyph />
                </SideRow>
              ))}
            </SideGroup>
            <SideGroup>
              <SideRow $level={1}>
                <SideIcon viewBox="0 0 32 32">{sideIcons.cloud}</SideIcon>
                <SideLabel>WPS云盘</SideLabel>
              </SideRow>
            </SideGroup>
            <SideGroup>
              <SideRow $level={1}>
                <SideIcon viewBox="0 0 32 32">{sideIcons.pc}</SideIcon>
                <SideLabel>此电脑</SideLabel>
              </SideRow>
              <SideRow $level={2}>
                <SideIcon viewBox="0 0 32 32">{sideIcons.cube}</SideIcon>
                <SideLabel>3D 对象</SideLabel>
              </SideRow>
              <SideRow $level={2}>
                <SideIcon viewBox="0 0 32 32">{sideIcons.film}</SideIcon>
                <SideLabel>视频</SideLabel>
              </SideRow>
            </SideGroup>
          </Sidebar>
          <ScrollTrack $w={32}>
            <ScrollArrow>
              <Chevron dir="up" size={13} color="#606060" sw={4} />
            </ScrollArrow>
            <Thumb $h={241} />
            <ScrollRest />
            <ScrollArrow>
              <Chevron dir="down" size={13} color="#606060" sw={4} />
            </ScrollArrow>
          </ScrollTrack>
          <Splitter />
          <Files>
            {files.map((f) => (
              <FileCell key={f.icon} $selected={f.selected}>
                <FileIcon viewBox="0 0 148 82">{fileIcons[f.icon]}</FileIcon>
                <FileName>{f.name}</FileName>
              </FileCell>
            ))}
          </Files>
          <ScrollTrack $w={33}>
            <ScrollArrow>
              <Chevron dir="up" size={13} color="#606060" sw={4} />
            </ScrollArrow>
            <Thumb $h={362} />
            <ScrollRest />
            <ScrollArrow>
              <Chevron dir="down" size={13} color="#606060" sw={4} />
            </ScrollArrow>
          </ScrollTrack>
        </Content>

        <Footer>
          <FieldRow>
            <FieldLabel>文件夹:</FieldLabel>
            <Field>
              <TextCaret />
            </Field>
          </FieldRow>
          <ButtonRow>
            <DialogButton $primary>选择为存储库目标</DialogButton>
            <DialogButton>取消</DialogButton>
          </ButtonRow>
          <Grip viewBox="0 0 12 12">
            {[
              [9, 1],
              [9, 5],
              [5, 5],
              [9, 9],
              [5, 9],
              [1, 9],
            ].map(([x, y], i) => (
              <rect key={i} x={x} y={y} width="2.500" height="2.500" fill="#b8b8b8" />
            ))}
          </Grip>
        </Footer>
      </Dialog>
    </>
  );
}
